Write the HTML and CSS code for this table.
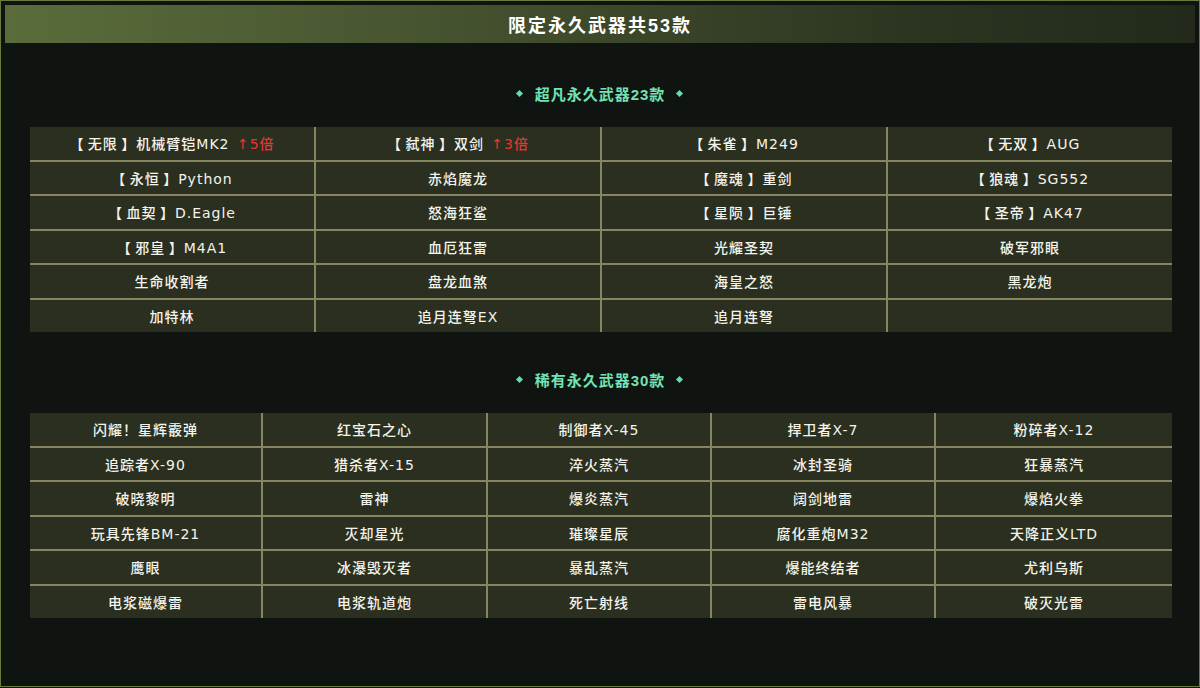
FILE: index.html
```html
<!DOCTYPE html>
<html lang="zh-CN">
<head>
<meta charset="utf-8">
<title>限定永久武器共53款</title>
<link rel="stylesheet" href="styles.css">
</head>
<body>
<div class="frame">
  <header class="banner">限定永久武器共53款</header>

  <h2 class="section-title first"><span class="dot"></span>超凡永久武器23款<span class="dot"></span></h2>
  <div class="grid grid-4">
    <div class="cell">【 无限 】机械臂铠MK2 <span class="up">↑5倍</span></div>
    <div class="cell">【 弑神 】双剑 <span class="up">↑3倍</span></div>
    <div class="cell">【 朱雀 】M249</div>
    <div class="cell">【 无双 】AUG</div>
    <div class="cell">【 永恒 】Python</div>
    <div class="cell">赤焰魔龙</div>
    <div class="cell">【 魔魂 】重剑</div>
    <div class="cell">【 狼魂 】SG552</div>
    <div class="cell">【 血契 】D.Eagle</div>
    <div class="cell">怒海狂鲨</div>
    <div class="cell">【 星陨 】巨锤</div>
    <div class="cell">【 圣帝 】AK47</div>
    <div class="cell">【 邪皇 】M4A1</div>
    <div class="cell">血厄狂雷</div>
    <div class="cell">光耀圣契</div>
    <div class="cell">破军邪眼</div>
    <div class="cell">生命收割者</div>
    <div class="cell">盘龙血煞</div>
    <div class="cell">海皇之怒</div>
    <div class="cell">黑龙炮</div>
    <div class="cell">加特林</div>
    <div class="cell">追月连弩EX</div>
    <div class="cell">追月连弩</div>
    <div class="cell"></div>
  </div>

  <h2 class="section-title second"><span class="dot"></span>稀有永久武器30款<span class="dot"></span></h2>
  <div class="grid grid-5">
    <div class="cell">闪耀！星辉霰弹</div>
    <div class="cell">红宝石之心</div>
    <div class="cell">制御者X-45</div>
    <div class="cell">捍卫者X-7</div>
    <div class="cell">粉碎者X-12</div>
    <div class="cell">追踪者X-90</div>
    <div class="cell">猎杀者X-15</div>
    <div class="cell">淬火蒸汽</div>
    <div class="cell">冰封圣骑</div>
    <div class="cell">狂暴蒸汽</div>
    <div class="cell">破晓黎明</div>
    <div class="cell">雷神</div>
    <div class="cell">爆炎蒸汽</div>
    <div class="cell">阔剑地雷</div>
    <div class="cell">爆焰火拳</div>
    <div class="cell">玩具先锋BM-21</div>
    <div class="cell">灭却星光</div>
    <div class="cell">璀璨星辰</div>
    <div class="cell">腐化重炮M32</div>
    <div class="cell">天降正义LTD</div>
    <div class="cell">鹰眼</div>
    <div class="cell">冰瀑毁灭者</div>
    <div class="cell">暴乱蒸汽</div>
    <div class="cell">爆能终结者</div>
    <div class="cell">尤利乌斯</div>
    <div class="cell">电浆磁爆雷</div>
    <div class="cell">电浆轨道炮</div>
    <div class="cell">死亡射线</div>
    <div class="cell">雷电风暴</div>
    <div class="cell">破灭光雷</div>
  </div>
</div>
</body>
</html>
```

FILE: styles.css
```css
* {
  box-sizing: border-box;
}

html, body {
  margin: 0;
  padding: 0;
  background: #0f1410;
}

body {
  width: 1200px;
  height: 688px;
  font-family: "Liberation Sans", "Noto Sans CJK SC", sans-serif;
}

.frame {
  width: 1200px;
  height: 687px;
  border: 1px solid #6a7b3b;
  background: #0f1410;
  display: flex;
  flex-direction: column;
  padding: 4px 4px 0 4px;
}

.banner {
  height: 38px;
  display: flex;
  align-items: center;
  justify-content: center;
  background: linear-gradient(90deg, #5a6c3b 0%, #4a5832 30%, #3a4428 55%, #2a3220 80%, #232a1b 100%);
  color: #ffffff;
  font-size: 18px;
  font-weight: bold;
  letter-spacing: 2px;
}

.section-title {
  margin: 0;
  height: 20px;
  display: flex;
  align-items: center;
  justify-content: center;
  gap: 12px;
  color: #72e3b4;
  font-size: 15px;
  font-weight: bold;
  letter-spacing: 1px;
}

.section-title.first {
  margin-top: 40px;
}

.section-title.second {
  margin-top: 37px;
}

.dot {
  width: 5px;
  height: 5px;
  background: #5fe0b0;
  transform: rotate(45deg);
  margin-right: 1px;
}

.grid {
  margin: 24px 0 0 25px;
  width: 1142px;
  height: 205px;
  display: grid;
  gap: 2px;
  background: #878560;
  grid-template-rows: repeat(6, 1fr);
}

.grid-4 {
  grid-template-columns: repeat(4, 1fr);
}

.grid-5 {
  grid-template-columns: 231px 223px 222px 222px 1fr;
}

.cell {
  background: #2a2f1f;
  color: #f4f4ec;
  font-family: "DejaVu Sans", "Noto Sans CJK SC", sans-serif;
  font-size: 14px;
  font-weight: 500;
  letter-spacing: 1px;
  word-spacing: -2px;
  display: flex;
  align-items: center;
  justify-content: center;
  white-space: pre;
}

.up {
  color: #e8352f;
  margin-left: 4px;
}
```
